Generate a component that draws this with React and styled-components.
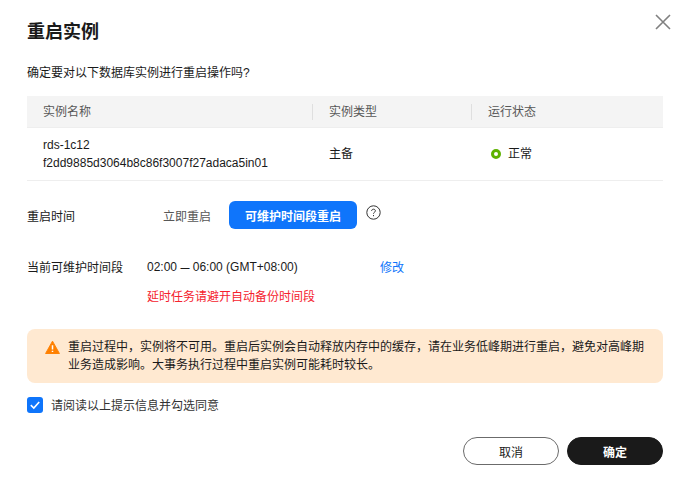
import React from "react";
import styled, { createGlobalStyle } from "styled-components";

const GlobalStyle = createGlobalStyle`
  html, body {
    margin: 0;
    padding: 0;
    background: #fff;
  }
  body {
    font-family: "Liberation Sans", "Noto Sans CJK SC", sans-serif;
    font-size: 12px;
    color: #1a1a1a;
  }
  * {
    box-sizing: border-box;
  }
`;

const Dialog = styled.div`
  position: relative;
  width: 691px;
  height: 494px;
  padding: 20px 28px 0 27px;
  overflow: hidden;
`;

const CloseBtn = styled.button`
  position: absolute;
  top: 13px;
  right: 19px;
  width: 18px;
  height: 18px;
  padding: 0;
  border: 0;
  background: none;
  svg {
    display: block;
  }
`;

const Title = styled.h2`
  margin: 0;
  font-size: 18px;
  line-height: 24px;
  font-weight: 700;
  color: #1a1a1a;
`;

const Question = styled.p`
  margin: 20px 0 0;
  line-height: 18px;
  color: #1a1a1a;
`;

const Table = styled.div`
  margin-top: 14px;
`;

const Row = styled.div`
  display: grid;
  grid-template-columns: 286px 159px 191px;
  align-items: center;
  height: ${(p) => (p.$head ? "32px" : "53px")};
  background: ${(p) => (p.$head ? "#f4f4f4" : "#fff")};
  border-bottom: 1px solid #eeeeee;
  color: ${(p) => (p.$head ? "#575757" : "#1a1a1a")};
`;

const Cell = styled.div`
  position: relative;
  padding-left: 16px;
  line-height: 18px;
  ${(p) =>
    p.$divider &&
    `&::after {
      content: "";
      position: absolute;
      top: 0;
      right: 0;
      width: 1px;
      height: 16px;
      margin-top: 1px;
      background: #dfdfdf;
    }`}
`;

const Status = styled.div`
  display: flex;
  align-items: center;
  gap: 7px;
  padding-left: 3px;
`;

const StatusDot = styled.span`
  width: 10px;
  height: 10px;
  border-radius: 50%;
  border: 3px solid #5eb200;
`;

const FormRow = styled.div`
  display: flex;
  align-items: center;
  margin-top: ${(p) => p.$top || 0}px;
`;

const Label = styled.div`
  width: 120px;
  flex: none;
  color: #1a1a1a;
`;

const Tab = styled.button`
  height: 28px;
  padding: 0 16px;
  border: 0;
  border-radius: 6px;
  font: inherit;
  font-weight: ${(p) => (p.$active ? 700 : 400)};
  color: ${(p) => (p.$active ? "#fff" : "#575757")};
  background: ${(p) => (p.$active ? "#0f75fb" : "transparent")};
  & + & {
    margin-left: 2px;
  }
`;

const Help = styled.span`
  display: flex;
  margin: -6px 0 0 9px;
`;

const Value = styled.div`
  width: 233px;
  flex: none;
`;

const Dash = styled.span`
  font-size: 9px;
  font-weight: 700;
`;

const Link = styled.a`
  color: #0f75fb;
`;

const Warn = styled.div`
  margin: 13px 0 0 120px;
  line-height: 18px;
  color: #f5222d;
`;

const Alert = styled.div`
  display: flex;
  gap: 8px;
  margin-top: 23px;
  height: 54px;
  padding: 9px 12px 9px 18px;
  border-radius: 8px;
  background: #ffe9d1;
  line-height: 18px;
  color: #1a1a1a;
  svg {
    flex: none;
    margin-top: 2px;
  }
`;

const CheckRow = styled.label`
  display: flex;
  align-items: center;
  gap: 8px;
  margin-top: 13px;
  color: #333;
`;

const CheckBox = styled.span`
  display: flex;
  align-items: center;
  justify-content: center;
  width: 16px;
  height: 16px;
  border-radius: 3px;
  background: #0f75fb;
`;

const Footer = styled.div`
  display: flex;
  justify-content: flex-end;
  gap: 8px;
  margin-top: 24px;
`;

const Pill = styled.button`
  width: 96px;
  height: 28px;
  border-radius: 14px;
  font: inherit;
  font-weight: ${(p) => (p.$primary ? 700 : 400)};
  border: 1px solid ${(p) => (p.$primary ? "#1a1a1a" : "#6b6b6b")};
  background: ${(p) => (p.$primary ? "#1a1a1a" : "#fff")};
  color: ${(p) => (p.$primary ? "#fff" : "#1a1a1a")};
`;

export default function App() {
  return (
    <>
      <GlobalStyle />
      <Dialog>
        <CloseBtn aria-label="close">
          <svg width="18" height="18" viewBox="0 0 18 18" fill="none" stroke="#808080" strokeWidth="1.6">
            <path d="M2 2l14 14M16 2L2 16" />
          </svg>
        </CloseBtn>
        <Title>重启实例</Title>
        <Question>确定要对以下数据库实例进行重启操作吗?</Question>
        <Table>
          <Row $head>
            <Cell $divider>实例名称</Cell>
            <Cell $divider>实例类型</Cell>
            <Cell>运行状态</Cell>
          </Row>
          <Row>
            <Cell>
              rds-1c12
              <br />
              f2dd9885d3064b8c86f3007f27adaca5in01
            </Cell>
            <Cell>主备</Cell>
            <Cell>
              <Status>
                <StatusDot />
                正常
              </Status>
            </Cell>
          </Row>
        </Table>
        <FormRow $top={20}>
          <Label>重启时间</Label>
          <Tab>立即重启</Tab>
          <Tab $active>可维护时间段重启</Tab>
          <Help>
            <svg width="15" height="15" viewBox="0 0 15 15" fill="none" stroke="#333" strokeWidth="1">
              <circle cx="7.5" cy="7.5" r="6.7" />
              <path d="M5.6 6c0-1.1.8-1.8 1.9-1.8s1.9.7 1.9 1.7c0 1.3-1.9 1.4-1.9 2.8" />
              <path d="M7.5 10v1.2" />
            </svg>
          </Help>
        </FormRow>
        <FormRow $top={29}>
          <Label>当前可维护时间段</Label>
          <Value>
            02:00 <Dash>—</Dash> 06:00 (GMT+08:00)
          </Value>
          <Link>修改</Link>
        </FormRow>
        <Warn>延时任务请避开自动备份时间段</Warn>
        <Alert>
          <svg width="15" height="15" viewBox="0 0 16 16">
            <path d="M8 1.2L15.4 14.4H.6z" fill="#ff8000" stroke="#ff8000" strokeLinejoin="round" />
            <path d="M8 5.6v4.6M8 11.4v1.5" stroke="#fff" strokeWidth="1.6" />
          </svg>
          <div>
            重启过程中，实例将不可用。重启后实例会自动释放内存中的缓存，请在业务低峰期进行重启，避免对高峰期业务造成影响。大事务执行过程中重启实例可能耗时较长。
          </div>
        </Alert>
        <CheckRow>
          <CheckBox>
            <svg width="12" height="12" viewBox="0 0 12 12" fill="none" stroke="#fff" strokeWidth="1.6">
              <path d="M1.8 6.2l3 2.8 5.4-6" />
            </svg>
          </CheckBox>
          请阅读以上提示信息并勾选同意
        </CheckRow>
        <Footer>
          <Pill>取消</Pill>
          <Pill $primary>确定</Pill>
        </Footer>
      </Dialog>
    </>
  );
}
